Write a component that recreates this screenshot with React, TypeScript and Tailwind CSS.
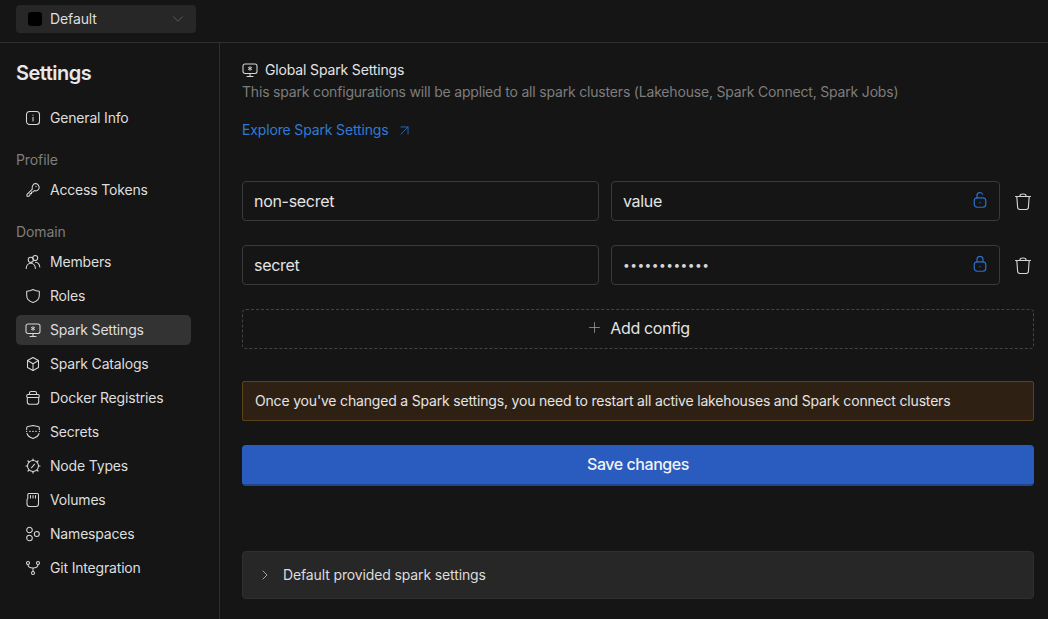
import { ReactNode } from "react";
import { ArrowUpRight, ChevronDown, ChevronRight, Plus } from "lucide-react";

function Icon({ children, className = "w-4 h-4 text-[#d8d8d8]" }: { children: ReactNode; className?: string }) {
  return (
    <svg viewBox="0 0 16 16" fill="none" stroke="currentColor" strokeWidth="1.050" strokeLinecap="round" strokeLinejoin="round" className={className}>
      {children}
    </svg>
  );
}

const InfoIcon = () => (
  <Icon>
    <rect x="1.500" y="1.500" width="13" height="13" rx="3" />
    <path d="M8 7.300v3.600M8 5v.3" />
  </Icon>
);
const KeyIcon = () => (
  <Icon>
    <path d="M10.300 1.600a4 4 0 0 1 3.900 4.100c-.3 2.400-2.800 3.800-4.900 2.900L8 10H6.500v1.600H5V13l-1.200 1.300H2v-2l5.300-5.200c-.8-2.600 1-5.400 3-5.500z" />
    <path d="M11 4.300v.3" />
  </Icon>
);
const MembersIcon = () => (
  <Icon>
    <circle cx="5.800" cy="5.800" r="2.600" />
    <circle cx="10.200" cy="4" r="2.500" />
    <path d="M1.200 14.500c.1-3 2-5.300 4.600-5.300s4.500 2.300 4.600 5.300" />
    <path d="M10.500 8.300c2.400.2 4 2 4.300 4.700" />
  </Icon>
);
const ShieldIcon = () => (
  <Icon>
    <path d="M8 1.500c2 1.100 4 1.600 6.300 1.700v4.300c0 3.400-2.700 6-6.300 7-3.600-1-6.300-3.600-6.300-7V3.200C4 3.100 6 2.600 8 1.500z" />
  </Icon>
);
const SparkIcon = ({ className }: { className?: string }) => (
  <Icon className={className}>
    <rect x="1" y="2" width="14" height="9.500" rx="2" />
    <path d="M8 11.500v3M5 14.500h6" />
    <path d="M8 4.500v4M6.300 5.500l3.400 2M9.700 5.500l-3.400 2" strokeWidth=".9" />
  </Icon>
);
const BoxIcon = () => (
  <Icon>
    <path d="M8 1.500l5.500 3v7L8 14.500l-5.500-3v-7z" />
    <path d="M2.500 4.500L8 7.700l5.500-3.200M8 7.700v6.800" />
  </Icon>
);
const DockerIcon = () => (
  <Icon>
    <path d="M4.500 4.500V3c0-.8.6-1.500 1.500-1.500h4c.9 0 1.500.7 1.500 1.500v1.500" />
    <rect x="1.800" y="4.500" width="12.400" height="3" rx="1" />
    <path d="M2.300 7.500v4.500c0 1.300 1 2.300 2.300 2.300h6.800c1.300 0 2.300-1 2.300-2.300V7.500" />
  </Icon>
);
const SecretsIcon = () => (
  <Icon>
    <path d="M1.700 5.500V4c0-.8.5-1.400 1.300-1.500 1.700-.2 3.400-.5 5-1 1.600.5 3.300.8 5 1 .8.1 1.300.7 1.300 1.500v1.500" />
    <path d="M2 9.500c.7 2.300 3 4 6 5 3-1 5.300-2.700 6-5" />
    <path d="M1.500 7.300h.1M4.800 7.300h.4M7.800 7.300h.4M10.800 7.300h.4M14.400 7.300h.1" strokeWidth="1.300" />
  </Icon>
);
const NodeIcon = () => (
  <Icon>
    <circle cx="8" cy="8" r="5.500" />
    <path d="M9.600 6.200L6.400 9.800" />
    <path d="M8 1v1.200M8 13.800V15M1 8h1.200M13.800 8H15M3 3l.9.9M12.100 12.100l.9.9M13 3l-.9.9M3.900 12.100L3 13" strokeWidth="1.200" />
  </Icon>
);
const VolumesIcon = () => (
  <Icon>
    <path d="M3.800 1.500h8.400c.7 0 1.300.6 1.300 1.300v9.200c0 1.400-1.100 2.500-2.500 2.500H4.500C3.100 14.500 2 13.400 2 12V7.500l.8-.8V2.500c0-.6.4-1 1-1z" />
    <path d="M5.500 3.500V6M8 3.500V6M10.500 3.500V6" />
  </Icon>
);
const NamespacesIcon = () => (
  <Icon>
    <circle cx="4.500" cy="4" r="2.800" />
    <circle cx="4.500" cy="12" r="2.800" />
    <circle cx="11.800" cy="8" r="2.500" />
  </Icon>
);
const GitIcon = () => (
  <Icon>
    <circle cx="3" cy="3" r="1.500" />
    <circle cx="13" cy="3" r="1.500" />
    <circle cx="8" cy="13" r="1.500" />
    <path d="M3 4.500c0 2.300 1.500 3.500 5 3.500s5-1.200 5-3.500M8 8v3.500" />
  </Icon>
);
const LockOpenIcon = () => (
  <svg viewBox="0 0 16 20" fill="none" stroke="#2b70cc" strokeWidth="1.400" strokeLinecap="round" strokeLinejoin="round" className="w-[14px] h-[17px] -translate-y-[1.500px]">
    <rect x="1.200" y="7.500" width="13.600" height="11" rx="3.500" />
    <path d="M4.500 7.500V4.500a3.400 3.400 0 0 1 6.500-1.300" />
    <path d="M8 13v.2" />
  </svg>
);
const LockIcon = () => (
  <svg viewBox="0 0 16 20" fill="none" stroke="#2b70cc" strokeWidth="1.400" strokeLinecap="round" strokeLinejoin="round" className="w-[14px] h-[17px] -translate-y-[1.500px]">
    <rect x="1.200" y="7.500" width="13.600" height="11" rx="3.500" />
    <path d="M4.500 7.500V4.500a3.500 3.500 0 0 1 7 0v3" />
    <path d="M8 13v.2" />
  </svg>
);
const TrashIcon = () => (
  <svg viewBox="0 0 16 18" fill="none" stroke="#d8d8d8" strokeWidth="1.100" strokeLinecap="round" strokeLinejoin="round" className="w-4 h-[18px] translate-y-px">
    <path d="M.5 3.500h15M5 3.500V2.800C5 1.800 6.200 1 8 1s3 .8 3 1.800v.7" />
    <path d="M1.800 3.500l.8 10.800c.1 1.400 1 2.200 2.300 2.200h6.200c1.300 0 2.200-.8 2.300-2.200l.8-10.800" />
  </svg>
);

type NavItem = { label: string; icon: ReactNode; active?: boolean };

function NavRow({ item }: { item: NavItem }) {
  return (
    <div className={`flex items-center h-[30px] pl-[9px] gap-[9px] rounded-[5px] text-sm tracking-[-0.18px] text-[#dedede] ${item.active ? "bg-[#333333]" : ""}`}>
      <span className="flex w-4 h-4 shrink-0">{item.icon}</span>
      <span>{item.label}</span>
    </div>
  );
}

const domainItems: NavItem[] = [
  { label: "Members", icon: <MembersIcon /> },
  { label: "Roles", icon: <ShieldIcon /> },
  { label: "Spark Settings", icon: <SparkIcon />, active: true },
  { label: "Spark Catalogs", icon: <BoxIcon /> },
  { label: "Docker Registries", icon: <DockerIcon /> },
  { label: "Secrets", icon: <SecretsIcon /> },
  { label: "Node Types", icon: <NodeIcon /> },
  { label: "Volumes", icon: <VolumesIcon /> },
  { label: "Namespaces", icon: <NamespacesIcon /> },
  { label: "Git Integration", icon: <GitIcon /> },
];

function ConfigRow({ name, value, icon, secret }: { name: string; value: string; icon: ReactNode; secret?: boolean }) {
  return (
    <div className="flex items-center">
      <div className="flex items-center w-[357px] h-10 px-[11px] rounded-[4px] border border-[#3a3a3a] text-base tracking-[-0.3px] text-[#e4e4e4]">{name}</div>
      <div className="flex items-center justify-between w-[389px] h-10 ml-3 pl-[11px] pr-3 rounded-[4px] border border-[#3a3a3a] text-base tracking-[-0.3px] text-[#e4e4e4]">
        <span className={secret ? "text-[12px] tracking-[0.45px] text-[#d4d4d4]" : ""}>{value}</span>
        {icon}
      </div>
      <div className="ml-[15px] flex">
        <TrashIcon />
      </div>
    </div>
  );
}

export default function App() {
  return (
    <div className="w-[1048px] h-[619px] overflow-hidden flex flex-col bg-[#151515] font-[Inter,sans-serif] text-[#e4e4e4]">
      <header className="h-[43px] shrink-0 border-b border-[#2e2e2e] pl-4 pt-[5px]">
        <div className="flex items-center w-[180px] h-[28px] rounded-[4px] bg-[#272727] pl-3 pr-[9px]">
          <span className="w-[14px] h-[14px] rounded-[3px] bg-black" />
          <span className="ml-2 text-sm tracking-[-0.1px] text-[#dedede]">Default</span>
          <ChevronDown className="ml-auto w-[18px] h-[18px] text-[#6a6a6a]" strokeWidth={1} />
        </div>
      </header>
      <div className="flex flex-1 min-h-0">
        <aside className="w-[220px] shrink-0 border-r border-[#2e2e2e] pl-4 pr-[28px] pt-[18px]">
          <h1 className="text-xl leading-[24px] font-semibold tracking-[-0.5px] text-[#e8e8e8]">Settings</h1>
          <div className="mt-[18px]">
            <NavRow item={{ label: "General Info", icon: <InfoIcon /> }} />
          </div>
          <div className="mt-[17px] h-5 text-sm leading-5 tracking-[-0.1px] text-[#7d7d7d]">Profile</div>
          <div className="mt-[5px]">
            <NavRow item={{ label: "Access Tokens", icon: <KeyIcon /> }} />
          </div>
          <div className="mt-[17px] h-5 text-sm leading-5 tracking-[-0.1px] text-[#7d7d7d]">Domain</div>
          <div className="mt-[5px] flex flex-col gap-1">
            {domainItems.map((item) => (
              <NavRow key={item.label} item={item} />
            ))}
          </div>
        </aside>
        <main className="flex-1 pl-[22px] pr-[14px] pt-[17px]">
          <div className="flex items-center gap-[7px] h-5 text-sm tracking-[-0.15px] text-[#e4e4e4]">
            <SparkIcon className="w-4 h-4 text-[#d8d8d8]" />
            <span>Global Spark Settings</span>
          </div>
          <p className="mt-[2px] text-sm leading-5 tracking-[-0.185px] text-[#7d7d7d]">
            This spark configurations will be applied to all spark clusters (Lakehouse, Spark Connect, Spark Jobs)
          </p>
          <div className="mt-[18px] flex items-center gap-[7px] h-5 text-sm tracking-[-0.15px] text-[#2f7ad6]">
            <span>Explore Spark Settings</span>
            <ArrowUpRight className="w-[17px] h-[17px]" strokeWidth={1.1} />
          </div>
          <div className="mt-[41px] flex flex-col gap-6">
            <ConfigRow name="non-secret" value="value" icon={<LockOpenIcon />} />
            <ConfigRow name="secret" value="••••••••••••" icon={<LockIcon />} secret />
          </div>
          <div className="mt-6 flex items-center justify-center gap-[7px] h-10 pb-[3px] rounded-[4px] border border-dashed border-[#444444] text-base tracking-[-0.35px] text-[#e4e4e4]">
            <Plus className="w-[17px] h-[17px] text-[#a0a0a0]" strokeWidth={1.1} />
            <span>Add config</span>
          </div>
          <div className="mt-8 flex items-center h-10 px-3 rounded-[2px] border border-[#5c4317] bg-[#2e2114] text-sm tracking-[-0.18px] text-[#e4e4e4]">
            Once you've changed a Spark settings, you need to restart all active lakehouses and Spark connect clusters
          </div>
          <button className="mt-6 w-full h-[41px] pb-px rounded-[4px] bg-[#2a5cc0] border-b-2 border-[#1f478f] text-base font-medium tracking-[-0.45px] text-[#f2f2f2]">
            Save changes
          </button>
          <div className="mt-[65px] flex items-center h-12 pl-[14px] gap-[10px] rounded-[4px] border border-[#303030] bg-[#272727] text-sm tracking-[-0.13px] text-[#dcdcdc]">
            <ChevronRight className="w-[16px] h-[16px] text-[#d0d0d0]" strokeWidth={1.1} />
            <span>Default provided spark settings</span>
          </div>
        </main>
      </div>
    </div>
  );
}
